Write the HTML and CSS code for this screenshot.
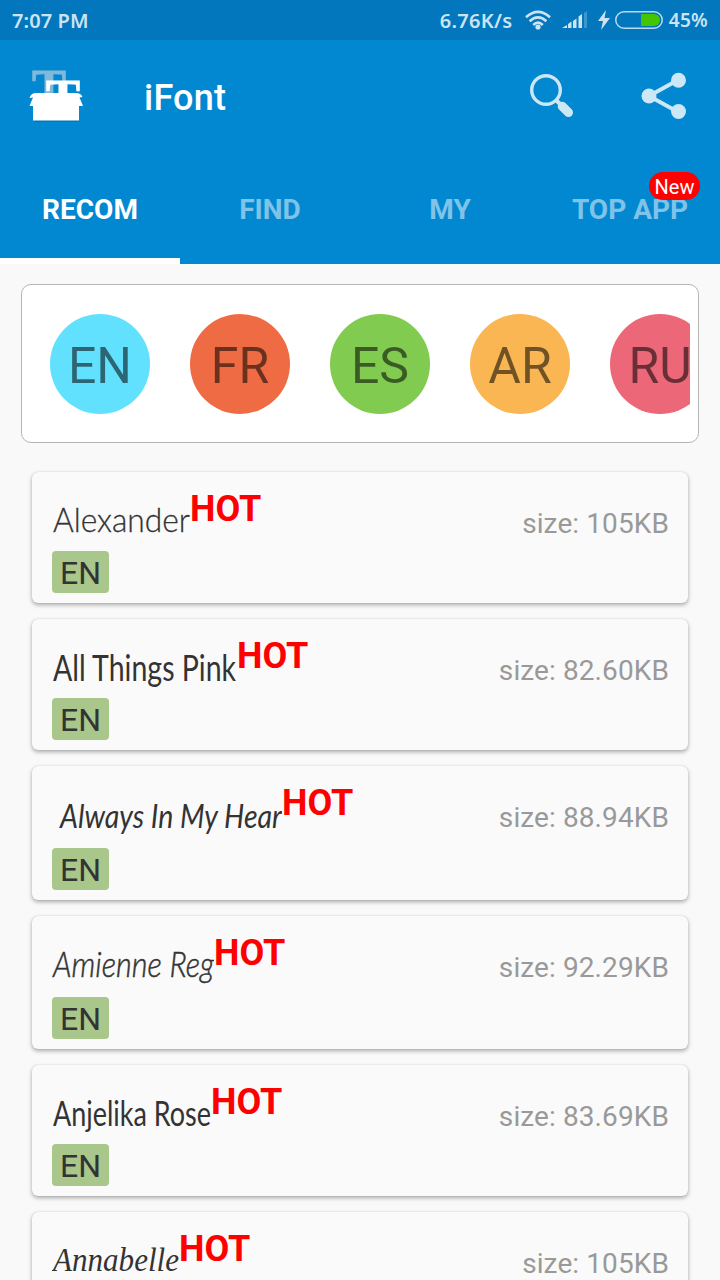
FILE: index.html
```
<!DOCTYPE html>
<html lang="en">
	<head>
		<meta charset="utf-8">
		<title>iFont</title>
		<link rel="stylesheet" href="styles.css">
	</head>
	<body>
		<div class="statusbar">
			<span class="clock">7:07 PM</span>
			<span class="speed">6.76K/s</span>
			<svg class="wifi" width="26" height="20" viewBox="0 0 26 20">
				<g fill="none" stroke="#cce4f2" stroke-width="2.6">
					<path d="M1 7.2Q13 -3.6 25 7.2"/>
					<path d="M4.6 11.2Q13 3.4 21.4 11.2"/>
					<path d="M8.2 15Q13 10.4 17.8 15"/>
				</g>
				<circle cx="13" cy="17" r="2.6" fill="#cce4f2"/>
			</svg>
			<svg class="signal" width="26" height="18" viewBox="0 0 26 18">
				<path fill="#cce4f2" d="M0 17L5 14V17zM6 13L9.500 10.500V17H6zM11 10L14.500 7.500V17H11zM16.500 5.500L20 3V17H16.500z"/>
				<path fill="#3d95cc" d="M22 2L25 0V17H22z"/>
			</svg>
			<svg class="bolt" width="12" height="20" viewBox="0 0 12 20">
				<path fill="#cce4f2" d="M8 0L0 11H5L3 20L12 8H6.500z"/>
			</svg>
			<svg class="battery" width="48" height="18" viewBox="0 0 48 18">
				<path fill="#45c400" d="M26 3H39a6 6 0 0 1 0 12H26z"/>
				<rect x=".75" y=".75" width="46.500" height="16.500" rx="8.250" fill="none" stroke="#b9daed" stroke-width="1.500"/>
			</svg>
			<span class="percent">45%</span>
		</div>

		<div class="toolbar">
			<svg class="logo" width="56" height="56" viewBox="0 0 56 56">
				<text class="logo-letter" x="4" y="38" textLength="34" lengthAdjust="spacingAndGlyphs" fill="#80b9d9" stroke="#80b9d9">T</text>
				<text class="logo-letter" x="18" y="48" textLength="34" lengthAdjust="spacingAndGlyphs" fill="#fff" stroke="#fff">T</text>
				<path fill="#05659c" d="M6 51H51V54H6z" opacity=".5"/>
				<path fill="#fff" d="M8 25H48Q53 25 54.500 29L51.500 29.500L55 38H51V52.500H5V38H1.500L5 29.500L1.500 30Q3 25 8 25z"/>
			</svg>
			<h1>iFont</h1>
			<svg class="search" width="46" height="46" viewBox="0 0 46 46">
				<circle cx="17" cy="17" r="14.300" fill="none" stroke="#cce7f6" stroke-width="3.400"/>
				<path d="M27 27L32 32" stroke="#cce7f6" stroke-width="4"/>
				<path d="M33.200 33.200L39.500 39.500" stroke="#cce7f6" stroke-width="9" stroke-linecap="round"/>
			</svg>
			<svg class="share" width="46" height="48" viewBox="0 0 46 48">
				<path d="M37 8L8 24L37 40" fill="none" stroke="#cce7f6" stroke-width="4"/>
				<g fill="#cce7f6">
					<circle cx="37.500" cy="8.300" r="7.500"/>
					<circle cx="8" cy="24" r="7.500"/>
					<circle cx="37.500" cy="39.500" r="7.500"/>
				</g>
			</svg>
		</div>

		<div class="tabs">
			<div class="tab active">RECOM</div>
			<div class="tab">FIND</div>
			<div class="tab">MY</div>
			<div class="tab">TOP APP<span class="badge">New</span></div>
		</div>

		<div class="langs">
			<div class="langs-scroll">
				<div class="lang en">EN</div>
				<div class="lang fr">FR</div>
				<div class="lang es">ES</div>
				<div class="lang ar">AR</div>
				<div class="lang ru">RU</div>
			</div>
		</div>

		<div class="list">
			<div class="card">
				<div class="info">
					<svg class="name" width="138" height="79"><text class="alexander" x="1" y="60" textLength="137" lengthAdjust="spacingAndGlyphs">Alexander</text></svg>
					<span class="hot">HOT</span>
					<span class="size">size: 105KB</span>
				</div>
				<span class="tag">EN</span>
			</div>
			<div class="card">
				<div class="info">
					<svg class="name" width="185" height="79"><text class="pink" x="1" y="62" textLength="183" lengthAdjust="spacingAndGlyphs">All Things Pink</text></svg>
					<span class="hot">HOT</span>
					<span class="size">size: 82.60KB</span>
				</div>
				<span class="tag">EN</span>
			</div>
			<div class="card">
				<div class="info">
					<svg class="name" width="230" height="82"><text class="always" x="8" y="62" textLength="232" lengthAdjust="spacingAndGlyphs">Always In My Heart</text></svg>
					<span class="hot">HOT</span>
					<span class="size">size: 88.94KB</span>
				</div>
				<span class="tag">EN</span>
			</div>
			<div class="card">
				<div class="info">
					<svg class="name" width="162" height="81"><text class="amienne" x="1" y="61" textLength="161" lengthAdjust="spacingAndGlyphs">Amienne Reg</text></svg>
					<span class="hot">HOT</span>
					<span class="size">size: 92.29KB</span>
				</div>
				<span class="tag">EN</span>
			</div>
			<div class="card">
				<div class="info">
					<svg class="name" width="159" height="79"><text class="anjelika" x="1" y="61" textLength="158" lengthAdjust="spacingAndGlyphs">Anjelika Rose</text></svg>
					<span class="hot">HOT</span>
					<span class="size">size: 83.69KB</span>
				</div>
				<span class="tag">EN</span>
			</div>
			<div class="card">
				<div class="info">
					<svg class="name" width="127" height="79"><text class="annabelle" x="1" y="59" textLength="126" lengthAdjust="spacingAndGlyphs">Annabelle</text></svg>
					<span class="hot">HOT</span>
					<span class="size">size: 105KB</span>
				</div>
				<span class="tag">EN</span>
			</div>
		</div>
	</body>
</html>
```
FILE: styles.css
```
*{
	box-sizing: border-box;
}

body{
	margin: 0;
	width: 720px;
	height: 1280px;
	overflow: hidden;
	background: #f9f9f9;
	font-family: Roboto, "Liberation Sans", sans-serif;
}

svg{
	display: block;
	flex: none;
}

/*status bar*/
.statusbar{
	display: flex;
	align-items: center;
	height: 40px;
	padding: 0 12px;
	background: #0277bd;
	color: #cce4f2;
	font: 600 20px "Noto Sans", sans-serif;
	white-space: nowrap;
}

.clock{
	width: 428px;
	letter-spacing: .1px;
}

.speed{
	width: 73px;
	letter-spacing: .3px;
}

.wifi{
	margin-left: 12px;
}

.signal{
	margin-left: 11px;
}

.bolt{
	margin-left: 10px;
}

.battery{
	margin-left: 5px;
}

.percent{
	margin-left: 6px;
	font-size: 19px;
	letter-spacing: .3px;
}

/*toolbar*/
.toolbar{
	display: flex;
	align-items: center;
	height: 112px;
	padding: 0 32px 0 28px;
	background: #0288d1;
}

.logo-letter{
	font: bold 52px "Liberation Serif", serif;
}

.toolbar h1{
	margin: 4px 0 0 60px;
	width: 385px;
	color: #fff;
	font-size: 36px;
	font-weight: 500;
	letter-spacing: .2px;
}

.share{
	margin-left: 66px;
}

/*tabs*/
.tabs{
	display: flex;
	height: 112px;
	background: #0288d1;
}

.tab{
	position: relative;
	flex: 1;
	color: #80c3e8;
	font-size: 28px;
	font-weight: bold;
	line-height: 115px;
	text-align: center;
}

.tab.active{
	color: #fff;
	border-bottom: 6px solid #fff;
}

.badge{
	position: absolute;
	top: 20px;
	right: 20px;
	width: 51px;
	height: 28px;
	border-radius: 14px;
	background: #f00;
	color: #fff;
	font-size: 20px;
	font-weight: normal;
	line-height: 30px;
}

/*languages*/
.langs{
	width: 678px;
	height: 159px;
	margin: 20px auto 29px;
	padding: 29px 8px 0 28px;
	background: #fff;
	border: 1px solid #b5b5b5;
	border-radius: 10px;
}

.langs-scroll{
	display: flex;
	gap: 40px;
	overflow: hidden;
}

.lang{
	flex: none;
	width: 100px;
	height: 100px;
	border-radius: 50%;
	color: rgba(0, 0, 0, .55);
	font-size: 50px;
	line-height: 104px;
	text-align: center;
}

.en{
	background: #62e1ff;
}

.fr{
	background: #ee6b44;
}

.es{
	background: #80cb50;
}

.ar{
	background: #f9b653;
}

.ru{
	background: #ec6878;
}

/*font list*/
.list{
	display: flex;
	flex-direction: column;
	gap: 16px;
	padding: 0 32px;
}

.card{
	padding: 0 20px 10px;
	background: #fafafa;
	border-radius: 6px;
	box-shadow: 0 2px 4px rgba(0, 0, 0, .32), 0 0 1px rgba(0, 0, 0, .2);
}

.info{
	display: flex;
	align-items: flex-start;
}

.name{
	fill: #333;
}

.hot{
	margin-top: 16px;
	color: #f00;
	font-size: 36px;
	font-weight: bold;
	line-height: 42px;
}

.size{
	margin: 36px -1px 0 auto;
	color: #999;
	font-size: 28px;
	line-height: 32px;
	letter-spacing: .1px;
}

.tag{
	display: block;
	width: 57px;
	height: 42px;
	border-radius: 4px;
	background: #a9c68b;
	color: #333;
	font-size: 32px;
	line-height: 44px;
	text-align: center;
}

/*font previews*/
.alexander{
	font: 300 34px Lato, sans-serif;
	stroke: #333;
	stroke-width: .3px;
}

.pink{
	font: 400 36px Lato, sans-serif;
}

.always{
	font: italic 400 32px Lato, cursive;
}

.amienne{
	font: italic 300 36px Lato, cursive;
	stroke: #333;
	stroke-width: .5px;
}

.anjelika{
	font: 400 34px Lato, sans-serif;
}

.annabelle{
	font: italic 34px "Liberation Serif", cursive;
}
```
